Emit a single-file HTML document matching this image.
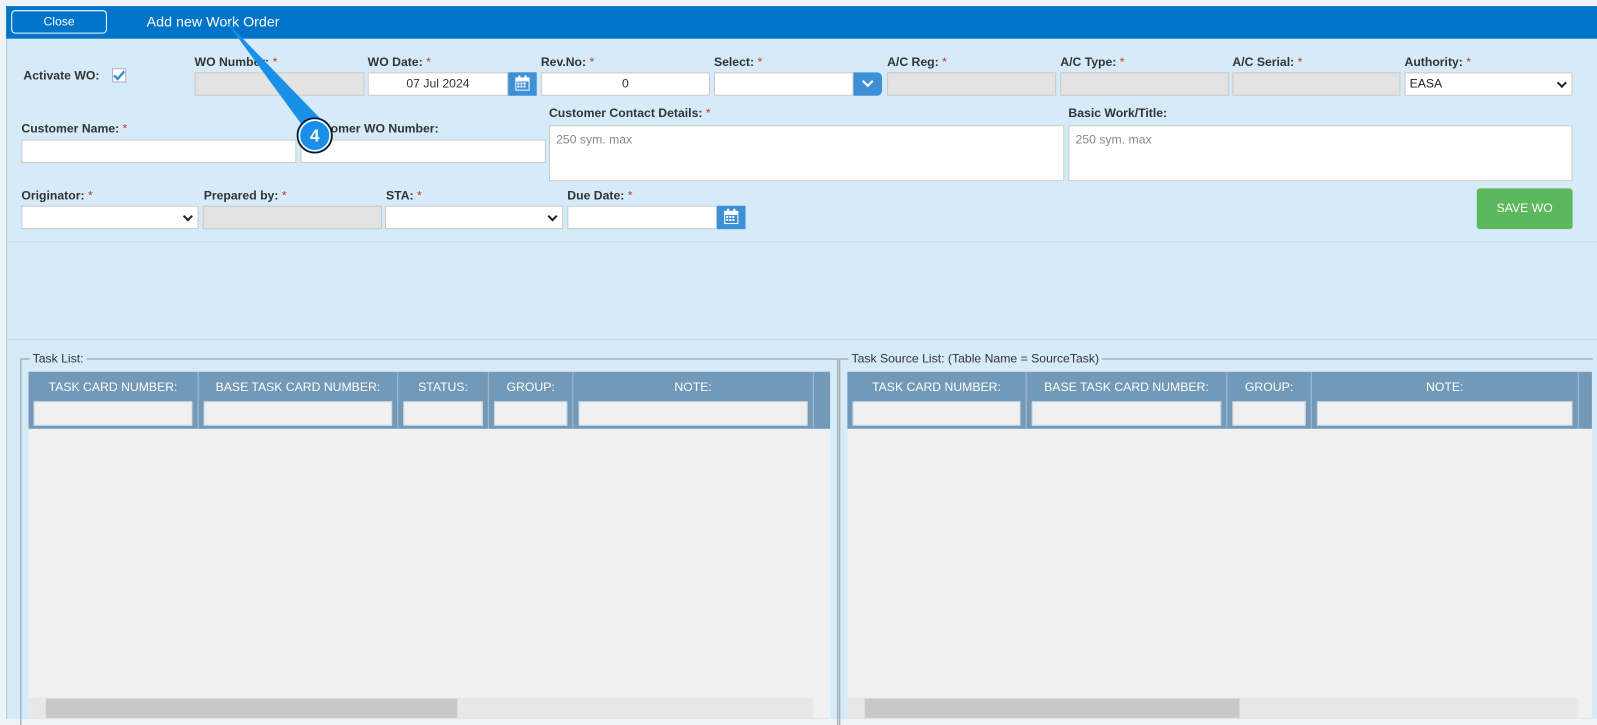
<!DOCTYPE html>
<html><head><style>
*{box-sizing:border-box;margin:0;padding:0}
body{width:1597px;height:705px;overflow:hidden;background:#eef3f9;font-family:"Liberation Sans",Arial,sans-serif;position:relative}
#w{position:absolute;left:0;top:0;width:1568px;height:692px;transform:scale(1.01849);transform-origin:0 0}
.a{position:absolute}
.lbl{position:absolute;font-size:12px;font-weight:bold;color:#333;white-space:nowrap}
.lbl i{color:#c0392b;font-style:normal;font-weight:normal}
.in{position:absolute;height:23px;background:#fff;border:1px solid #c8c8c8}
.g{background:#e3e3e3}
.cal{position:absolute;width:28px;height:23px;background:#3d8fd6}
.chev{position:absolute;right:6px;top:6px;width:7px;height:7px;border-right:2px solid #222;border-bottom:2px solid #222;transform:rotate(45deg)}
.ta{position:absolute;background:#fff;border:1px solid #c8c8c8;font-size:12px;color:#888;padding:6px 6px}
.th{position:absolute;top:365px;height:56px;background:#7399b8;border-right:1px solid #a4bed3;color:#fff;font-size:12px;text-align:center;padding-top:8px}
.th div{position:absolute;left:5px;right:5px;top:29px;height:24px;background:#f0f0f0;border:1px solid #c9d7e3}
</style></head><body><div id="w">
<div class="a" style="left:6px;top:6px;width:1570px;height:700px;background:#d5ebfa;border-left:1px solid #b8c6d3"></div>
<div class="a" style="left:6px;top:6px;width:1570px;height:32px;background:#0074c8"></div>
<div class="a" style="left:11px;top:10px;width:94px;height:23px;border:1px solid #fff;border-radius:4px;color:#fff;font-size:12px;text-align:center;line-height:20px">Close</div>
<div class="a" style="left:144px;top:13px;color:#fff;font-size:14px">Add new Work Order</div>

<div class="lbl" style="left:23px;top:67px">Activate WO:</div>
<div class="a" style="left:110px;top:67px;width:14px;height:14px;background:#fff;border:1px solid #aac"><svg width="14" height="14" style="position:absolute;left:-1px;top:-1px"><path d="M2 7 L5.5 10.5 L12 3" stroke="#3d8fd6" stroke-width="2.5" fill="none"/></svg></div>

<div class="lbl" style="left:191px;top:54px">WO Number: <i>*</i></div>
<div class="in g" style="left:191px;top:71px;width:167px"></div>
<div class="lbl" style="left:361px;top:54px">WO Date: <i>*</i></div>
<div class="in" style="left:361px;top:71px;width:138px;font-size:12px;text-align:center;line-height:21px;color:#333">07 Jul 2024</div>
<div class="cal" style="left:499px;top:71px"><svg width="28" height="23"><rect x="7" y="5" width="14" height="13" fill="#fff"/><rect x="8" y="9" width="12" height="8" fill="#3d8fd6"/><g fill="#fff"><rect x="9" y="10" width="2" height="2"/><rect x="12" y="10" width="2" height="2"/><rect x="15" y="10" width="2" height="2"/><rect x="9" y="13" width="2" height="2"/><rect x="12" y="13" width="2" height="2"/><rect x="15" y="13" width="2" height="2"/></g><rect x="10" y="3" width="2" height="4" fill="#fff"/><rect x="16" y="3" width="2" height="4" fill="#fff"/></svg></div>
<div class="lbl" style="left:531px;top:54px">Rev.No: <i>*</i></div>
<div class="in" style="left:531px;top:71px;width:166px;font-size:12px;text-align:center;line-height:21px;color:#333">0</div>
<div class="lbl" style="left:701px;top:54px">Select: <i>*</i></div>
<div class="in" style="left:701px;top:71px;width:137px"></div>
<div class="a" style="left:838px;top:71px;width:28px;height:23px;background:#3d8fd6;border-radius:0 5px 5px 0"><div class="a" style="left:10px;top:5px;width:8px;height:8px;border-right:2px solid #fff;border-bottom:2px solid #fff;transform:rotate(45deg)"></div></div>
<div class="lbl" style="left:871px;top:54px">A/C Reg: <i>*</i></div>
<div class="in g" style="left:871px;top:71px;width:166px"></div>
<div class="lbl" style="left:1041px;top:54px">A/C Type: <i>*</i></div>
<div class="in g" style="left:1041px;top:71px;width:166px"></div>
<div class="lbl" style="left:1210px;top:54px">A/C Serial: <i>*</i></div>
<div class="in g" style="left:1210px;top:71px;width:165px"></div>
<div class="lbl" style="left:1379px;top:54px">Authority: <i>*</i></div>
<div class="in" style="left:1379px;top:71px;width:165px;font-size:12px;padding-left:4px;line-height:21px;color:#222">EASA<span class="chev"></span></div>

<div class="lbl" style="left:21px;top:119px">Customer Name: <i>*</i></div>
<div class="in" style="left:21px;top:137px;width:270px"></div>
<div class="lbl" style="left:298px;top:119px">Customer WO Number:</div>
<div class="in" style="left:295px;top:137px;width:241px"></div>
<div class="lbl" style="left:539px;top:104px">Customer Contact Details: <i>*</i></div>
<div class="ta" style="left:539px;top:123px;width:506px;height:55px">250 sym. max</div>
<div class="lbl" style="left:1049px;top:104px">Basic Work/Title:</div>
<div class="ta" style="left:1049px;top:123px;width:495px;height:55px">250 sym. max</div>

<div class="lbl" style="left:21px;top:185px">Originator: <i>*</i></div>
<div class="in" style="left:21px;top:202px;width:174px"><span class="chev"></span></div>
<div class="lbl" style="left:200px;top:185px">Prepared by: <i>*</i></div>
<div class="in g" style="left:199px;top:202px;width:176px"></div>
<div class="lbl" style="left:379px;top:185px">STA: <i>*</i></div>
<div class="in" style="left:378px;top:202px;width:175px"><span class="chev"></span></div>
<div class="lbl" style="left:557px;top:185px">Due Date: <i>*</i></div>
<div class="in" style="left:557px;top:202px;width:147px"></div>
<div class="cal" style="left:704px;top:202px"><svg width="28" height="23"><rect x="7" y="5" width="14" height="13" fill="#fff"/><rect x="8" y="9" width="12" height="8" fill="#3d8fd6"/><g fill="#fff"><rect x="9" y="10" width="2" height="2"/><rect x="12" y="10" width="2" height="2"/><rect x="15" y="10" width="2" height="2"/><rect x="9" y="13" width="2" height="2"/><rect x="12" y="13" width="2" height="2"/><rect x="15" y="13" width="2" height="2"/></g><rect x="10" y="3" width="2" height="4" fill="#fff"/><rect x="16" y="3" width="2" height="4" fill="#fff"/></svg></div>
<div class="a" style="left:1450px;top:185px;width:94px;height:40px;background:#5cb85c;border-radius:3px;color:#fff;font-size:12px;text-align:center;line-height:38px">SAVE WO</div>

<div class="a" style="left:7px;top:237px;width:1570px;height:1px;background:#c4d8e6"></div>
<div class="a" style="left:7px;top:333px;width:1570px;height:1px;background:#c4d8e6"></div>

<div class="a" style="left:20px;top:352px;width:803px;height:360px;border:1px solid #999;border-bottom:none"></div>
<div class="a" style="left:29px;top:345px;background:#d5ebfa;padding:0 3px;font-size:12px;color:#333">Task List:</div>
<div class="a" style="left:28px;top:365px;width:787px;height:340px;background:#f0f0f0"></div>
<div class="th" style="left:28px;width:167px">TASK CARD NUMBER:<div></div></div>
<div class="th" style="left:195px;width:196px">BASE TASK CARD NUMBER:<div></div></div>
<div class="th" style="left:391px;width:89px">STATUS:<div></div></div>
<div class="th" style="left:480px;width:83px">GROUP:<div></div></div>
<div class="th" style="left:563px;width:236px">NOTE:<div></div></div>
<div class="th" style="left:799px;width:16px;border:none"></div>
<div class="a" style="left:28px;top:685px;width:770px;height:20px;background:#e8e8e8"></div>
<div class="a" style="left:45px;top:686px;width:404px;height:19px;background:#c8c8c8"></div>

<div class="a" style="left:824px;top:352px;width:740px;height:360px;border:1px solid #999;border-bottom:none;border-right:none"></div>
<div class="a" style="left:833px;top:345px;background:#d5ebfa;padding:0 3px;font-size:12px;color:#333">Task Source List: (Table Name = SourceTask)</div>
<div class="a" style="left:832px;top:365px;width:731px;height:340px;background:#f0f0f0"></div>
<div class="th" style="left:832px;width:176px">TASK CARD NUMBER:<div></div></div>
<div class="th" style="left:1008px;width:197px">BASE TASK CARD NUMBER:<div></div></div>
<div class="th" style="left:1205px;width:83px">GROUP:<div></div></div>
<div class="th" style="left:1288px;width:262px">NOTE:<div></div></div>
<div class="th" style="left:1550px;width:13px;border:none"></div>
<div class="a" style="left:832px;top:685px;width:718px;height:20px;background:#e8e8e8"></div>
<div class="a" style="left:849px;top:686px;width:368px;height:19px;background:#c8c8c8"></div>

<svg class="a" style="left:0;top:0" width="400" height="200">
<polygon points="222,21 296,122 318,120" fill="#1a8fe8"/>
<circle cx="309" cy="133" r="17" fill="#1a8fe8" stroke="#111" stroke-width="1.5"/>
<circle cx="309" cy="133" r="15" fill="none" stroke="#fff" stroke-width="1.5"/>
<text x="309" y="139" fill="#fff" font-family="Liberation Sans,sans-serif" font-size="17" font-weight="bold" text-anchor="middle">4</text>
</svg>
</div></body></html>
